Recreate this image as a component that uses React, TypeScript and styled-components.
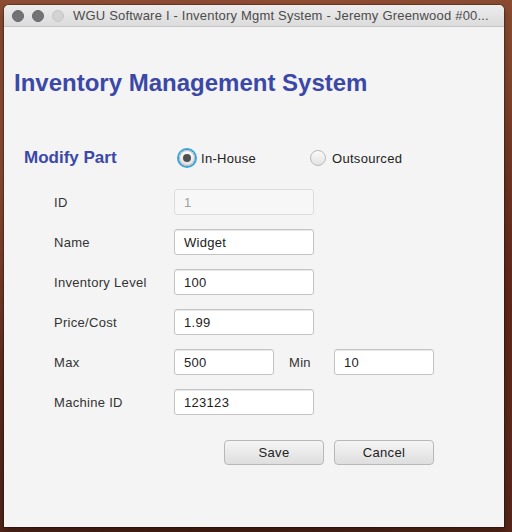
import React from "react";
import styled, { createGlobalStyle } from "styled-components";

const GlobalStyle = createGlobalStyle`
  html, body { margin: 0; padding: 0; }
  body {
    width: 512px;
    height: 532px;
    overflow: hidden;
    font-family: "Liberation Sans", Arial, sans-serif;
  }
`;

const Desktop = styled.div`
  width: 512px;
  height: 532px;
  box-sizing: border-box;
  padding: 5px 8px 5px 4px;
  background:
    radial-gradient(circle at 10% 30%, rgba(170, 100, 70, 0.55), transparent 35%),
    radial-gradient(circle at 95% 60%, rgba(90, 35, 20, 0.7), transparent 40%),
    radial-gradient(circle at 60% 0%, rgba(150, 80, 50, 0.6), transparent 40%),
    radial-gradient(circle at 40% 100%, rgba(70, 30, 20, 0.8), transparent 45%),
    linear-gradient(180deg, #8a4b32 0%, #6e3322 50%, #55271a 100%);
`;

const Window = styled.div`
  width: 500px;
  height: 522px;
  display: flex;
  flex-direction: column;
  border-radius: 5px 5px 0 0;
  overflow: hidden;
  background: #f4f4f4;
  box-shadow: 0 0 0 1px rgba(0, 0, 0, 0.25), 0 4px 10px rgba(0, 0, 0, 0.35);
`;

const TitleBar = styled.div`
  height: 21px;
  flex: none;
  display: flex;
  align-items: center;
  padding-left: 8px;
  background: linear-gradient(180deg, #ececec 0%, #dcdcdc 100%);
  border-bottom: 1px solid #c6c6c6;
`;

const Light = styled.span<{ $dim?: boolean }>`
  width: 12px;
  height: 12px;
  box-sizing: border-box;
  border-radius: 50%;
  margin-right: 8px;
  background: ${(p) => (p.$dim ? "#d3d3d3" : "#737376")};
  border: 1px solid ${(p) => (p.$dim ? "#c4c4c4" : "#68686b")};
`;

const TitleText = styled.span`
  margin-left: 1px;
  font-size: 13px;
  letter-spacing: 0.2px;
  color: #4c4c4c;
  white-space: nowrap;
`;

const Content = styled.div`
  flex: 1;
  display: flex;
  flex-direction: column;
  padding: 42px 0 0 10px;
`;

const Heading = styled.h1`
  margin: 0;
  font-family: "Liberation Sans", Arial, sans-serif;
  font-size: 24px;
  line-height: 28px;
  font-weight: bold;
  color: #3b48a8;
`;

const ModeRow = styled.div`
  display: flex;
  align-items: center;
  height: 20px;
  margin: 51px 0 0 10px;
`;

const SubHeading = styled.h2`
  margin: 0;
  width: 155px;
  font-size: 17px;
  font-weight: bold;
  color: #3b48a8;
`;

const RadioOption = styled.label<{ $width: number }>`
  display: flex;
  align-items: center;
  width: ${(p) => p.$width}px;
  font-size: 13px;
  letter-spacing: 0.3px;
  color: #222;
`;

const RadioCircle = styled.span<{ $checked?: boolean }>`
  width: 16px;
  height: 16px;
  box-sizing: border-box;
  border-radius: 50%;
  margin-right: 6px;
  display: flex;
  align-items: center;
  justify-content: center;
  border: 1px solid #b9b9b9;
  background: linear-gradient(180deg, #fafafa 0%, #e2e2e2 100%);
  box-shadow: ${(p) => (p.$checked ? "0 0 0 2px #3aa3da" : "none")};
  &::after {
    content: "";
    display: ${(p) => (p.$checked ? "block" : "none")};
    width: 8px;
    height: 8px;
    border-radius: 50%;
    background: #505050;
  }
`;

const Form = styled.div`
  display: flex;
  flex-direction: column;
  gap: 14px;
  margin: 21px 0 0 40px;
`;

const Row = styled.div`
  display: flex;
  align-items: center;
  height: 26px;
`;

const Label = styled.span<{ $width: number; $indent?: number }>`
  width: ${(p) => p.$width}px;
  margin-left: ${(p) => p.$indent ?? 0}px;
  font-size: 13px;
  letter-spacing: 0.3px;
  color: #333;
`;

const Field = styled.div<{ $width: number; $disabled?: boolean }>`
  width: ${(p) => p.$width}px;
  height: 26px;
  box-sizing: border-box;
  display: flex;
  align-items: center;
  padding-left: 9px;
  border-radius: 3px;
  border: 1px solid ${(p) => (p.$disabled ? "#dcdcdc" : "#c4c4c4")};
  background: ${(p) => (p.$disabled ? "#f7f7f7" : "#ffffff")};
  box-shadow: ${(p) => (p.$disabled ? "none" : "inset 0 1px 0 #e8e8e8")};
  font-size: 13px;
  letter-spacing: 0.3px;
  color: ${(p) => (p.$disabled ? "#a0a0a0" : "#222")};
`;

const Buttons = styled.div`
  display: flex;
  justify-content: flex-end;
  gap: 10px;
  margin-top: 25px;
  padding-right: 70px;
`;

const Button = styled.button`
  width: 100px;
  height: 25px;
  box-sizing: border-box;
  border-radius: 4px;
  border: 1px solid #b8b8b8;
  background: linear-gradient(180deg, #f5f5f5 0%, #dedede 100%);
  font-family: "Liberation Sans", Arial, sans-serif;
  font-size: 13px;
  letter-spacing: 0.3px;
  color: #222;
  padding: 0;
`;

const fields: { label: string; value: string; disabled?: boolean }[] = [
  { label: "ID", value: "1", disabled: true },
  { label: "Name", value: "Widget" },
  { label: "Inventory Level", value: "100" },
  { label: "Price/Cost", value: "1.99" },
];

export default function App() {
  return (
    <>
      <GlobalStyle />
      <Desktop>
        <Window>
          <TitleBar>
            <Light />
            <Light />
            <Light $dim />
            <TitleText>WGU Software I - Inventory Mgmt System - Jeremy Greenwood #00...</TitleText>
          </TitleBar>
          <Content>
            <Heading>Inventory Management System</Heading>
            <ModeRow>
              <SubHeading>Modify Part</SubHeading>
              <RadioOption $width={131}>
                <RadioCircle $checked />
                In-House
              </RadioOption>
              <RadioOption $width={120}>
                <RadioCircle />
                Outsourced
              </RadioOption>
            </ModeRow>
            <Form>
              {fields.map((f) => (
                <Row key={f.label}>
                  <Label $width={120}>{f.label}</Label>
                  <Field $width={140} $disabled={f.disabled}>
                    {f.value}
                  </Field>
                </Row>
              ))}
              <Row>
                <Label $width={120}>Max</Label>
                <Field $width={100}>500</Field>
                <Label $width={45} $indent={15}>
                  Min
                </Label>
                <Field $width={100}>10</Field>
              </Row>
              <Row>
                <Label $width={120}>Machine ID</Label>
                <Field $width={140}>123123</Field>
              </Row>
            </Form>
            <Buttons>
              <Button>Save</Button>
              <Button>Cancel</Button>
            </Buttons>
          </Content>
        </Window>
      </Desktop>
    </>
  );
}
